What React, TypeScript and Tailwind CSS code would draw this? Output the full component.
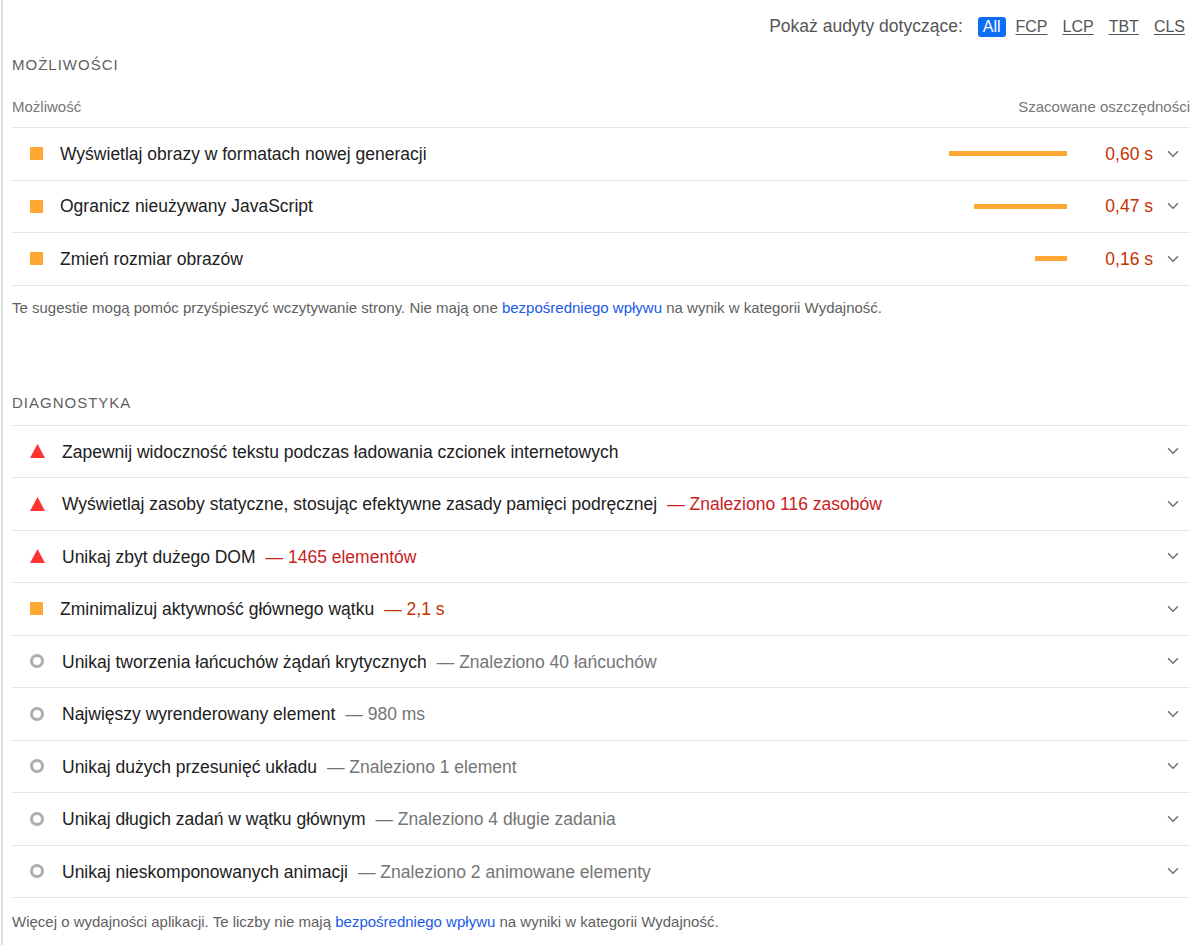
import { ChevronDown } from "lucide-react";

type Rating = "fail" | "average" | "info";

type Opportunity = {
  title: string;
  savings: string;
  bar: number;
};

type Diagnostic = {
  title: string;
  rating: Rating;
  display?: string;
};

const OPPORTUNITIES: Opportunity[] = [
  { title: "Wyświetlaj obrazy w formatach nowej generacji", savings: "0,60 s", bar: 118 },
  { title: "Ogranicz nieużywany JavaScript", savings: "0,47 s", bar: 93 },
  { title: "Zmień rozmiar obrazów", savings: "0,16 s", bar: 32 },
];

const DIAGNOSTICS: Diagnostic[] = [
  { title: "Zapewnij widoczność tekstu podczas ładowania czcionek internetowych", rating: "fail" },
  {
    title: "Wyświetlaj zasoby statyczne, stosując efektywne zasady pamięci podręcznej",
    rating: "fail",
    display: "Znaleziono 116 zasobów",
  },
  { title: "Unikaj zbyt dużego DOM", rating: "fail", display: "1465 elementów" },
  { title: "Zminimalizuj aktywność głównego wątku", rating: "average", display: "2,1 s" },
  { title: "Unikaj tworzenia łańcuchów żądań krytycznych", rating: "info", display: "Znaleziono 40 łańcuchów" },
  { title: "Najwięszy wyrenderowany element", rating: "info", display: "980 ms" },
  { title: "Unikaj dużych przesunięć układu", rating: "info", display: "Znaleziono 1 element" },
  { title: "Unikaj długich zadań w wątku głównym", rating: "info", display: "Znaleziono 4 długie zadania" },
  { title: "Unikaj nieskomponowanych animacji", rating: "info", display: "Znaleziono 2 animowane elementy" },
];

const FILTERS = ["All", "FCP", "LCP", "TBT", "CLS"];

const DISPLAY_COLOR: Record<Rating, string> = {
  fail: "text-[#c7221f]",
  average: "text-[#c33300]",
  info: "text-[#757575]",
};

function ScoreIcon({ rating }: { rating: Rating }) {
  if (rating === "fail") {
    return (
      <svg width="15" height="14" viewBox="0 0 15 14" className="block shrink-0">
        <polygon points="7.5,0 15,14 0,14" fill="#ff3333" />
      </svg>
    );
  }
  if (rating === "average") {
    return <span className="block h-[13px] w-[13px] shrink-0 bg-[#ffa733]" />;
  }
  return <span className="block h-[14px] w-[14px] shrink-0 rounded-full border-[3px] border-[#adadad]" />;
}

function Chevron() {
  return <ChevronDown className="h-[18px] w-[18px] shrink-0 text-[#777]" strokeWidth={2.2} />;
}

function GroupTitle({ children }: { children: string }) {
  return (
    <div className="h-[24px] text-[15px] leading-[24px] tracking-[1px] text-[#5f5f5f] uppercase">{children}</div>
  );
}

function FootNote({ before, after }: { before: string; after: string }) {
  return (
    <p className="text-[15px] leading-[16px] text-[#5f5f5f]">
      {before}{" "}
      <a href="#" className="text-[#1a5ae6]">
        bezpośredniego wpływu
      </a>{" "}
      {after}
    </p>
  );
}

export default function App() {
  return (
    <div className="min-h-screen bg-white font-['Liberation_Sans',Arial,sans-serif]">
      <div className="ml-px min-h-[945px] border-l-2 border-[#dedede] pr-[2px] pl-[9px]">
        {/* metric filter */}
        <div className="flex h-[53px] items-center justify-end text-[#555]">
          <span className="text-[17.5px]">Pokaż audyty dotyczące:</span>
          <div className="ml-[15px] flex items-center gap-[5px] text-[16px]">
            {FILTERS.map((f) =>
              f === "All" ? (
                <span key={f} className="rounded-[3px] bg-[#0b6ef5] px-[5px] leading-[20px] text-white">
                  {f}
                </span>
              ) : (
                <span key={f} className="px-[5px] leading-[20px] underline underline-offset-2">
                  {f}
                </span>
              ),
            )}
          </div>
        </div>

        {/* opportunities */}
        <GroupTitle>Możliwości</GroupTitle>
        <div className="flex items-center justify-between border-b border-[#e6e6e6] pt-[22px] pb-[12px] text-[15px] leading-[16px] text-[#777]">
          <span>Możliwość</span>
          <span>Szacowane oszczędności</span>
        </div>
        {OPPORTUNITIES.map((o) => (
          <div key={o.title} className="flex h-[52.5px] items-center border-b border-[#e6e6e6] pl-[18px]">
            <ScoreIcon rating="average" />
            <span className="ml-[17px] flex-1 text-[17.5px] text-[#212121]">{o.title}</span>
            <div className="flex w-[118px] justify-end">
              <span className="block h-[5px] bg-[#ffa733]" style={{ width: o.bar }} />
            </div>
            <span className="ml-[38px] text-[17.5px] text-[#c33300]">{o.savings}</span>
            <span className="mr-[8px] ml-[11px] flex">
              <Chevron />
            </span>
          </div>
        ))}
        <div className="mt-[14px]">
          <FootNote
            before="Te sugestie mogą pomóc przyśpieszyć wczytywanie strony. Nie mają one"
            after="na wynik w kategorii Wydajność."
          />
        </div>

        {/* diagnostics */}
        <div className="mt-[75px] border-b border-[#e6e6e6] pb-[10px]">
          <GroupTitle>Diagnostyka</GroupTitle>
        </div>
        {DIAGNOSTICS.map((d) => (
          <div key={d.title} className="flex h-[52.5px] items-center border-b border-[#e6e6e6] pl-[18px]">
            <ScoreIcon rating={d.rating} />
            <span
              className={`flex-1 pt-px text-[17.5px] text-[#212121] ${d.rating === "info" ? "ml-[18px]" : "ml-[17px]"}`}
            >
              {d.title}
              {d.display && <span className={`ml-[10px] ${DISPLAY_COLOR[d.rating]}`}>— {d.display}</span>}
            </span>
            <span className="mr-[8px] flex">
              <Chevron />
            </span>
          </div>
        ))}
        <div className="mt-[16px] pb-[16px]">
          <FootNote
            before="Więcej o wydajności aplikacji. Te liczby nie mają"
            after="na wyniki w kategorii Wydajność."
          />
        </div>
      </div>
    </div>
  );
}
